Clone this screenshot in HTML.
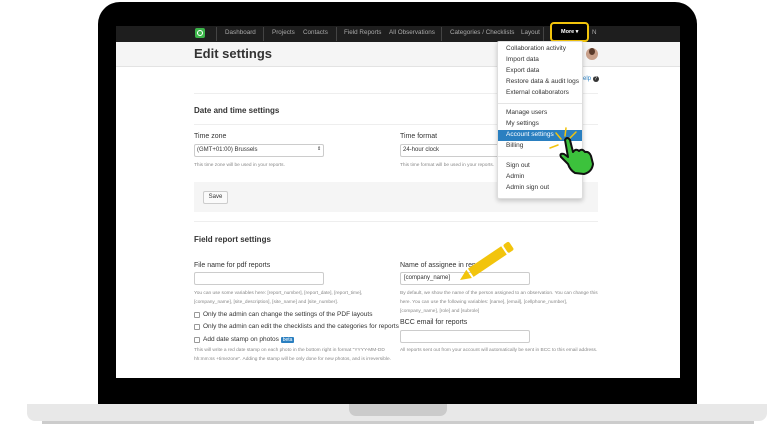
<!DOCTYPE html>
<html><head><meta charset="utf-8"><style>
*{box-sizing:border-box;margin:0;padding:0}
body{width:768px;height:432px;background:#fff;position:relative;overflow:hidden;font-family:"Liberation Sans",sans-serif;color:#333}
.a{position:absolute}
.t{position:absolute;white-space:nowrap}
.nav{font-size:6.3px;color:#aaa}
.lbl{font-size:7px;color:#333}
.help{font-size:4.8px;color:#888;line-height:9px}
.inp{position:absolute;border:1px solid #ccc;border-radius:2px;background:#fff;height:13px}
.dd{font-size:6.5px;color:#333}
.cb{position:absolute;width:6px;height:6px;border:1px solid #999;border-radius:1px;background:#fff}
</style></head><body>
<div class="a" style="left:98px;top:2px;width:599px;height:403px;background:#000;border-radius:22px 22px 0 0"></div>
<div class="a" style="left:27px;top:404px;width:740px;height:17px;background:#e8e8e8;border-radius:0 0 8px 8px"></div>
<div class="a" style="left:42px;top:421px;width:712px;height:3px;background:#ccc"></div>
<div class="a" style="left:349px;top:404px;width:98px;height:12px;background:#cbcbcb;border-radius:0 0 7px 7px"></div>
<div class="a" style="left:116px;top:26px;width:564px;height:352px;background:#fff;overflow:hidden">
 <div class="a" style="left:0;top:0;width:564px;height:16px;background:#1e1e1e"></div>
 <div class="a" style="left:0;top:16px;width:564px;height:25px;background:#f5f5f5;border-bottom:1px solid #e3e3e3"></div>
</div>
<div class="a" style="left:195px;top:28px;width:10px;height:10px;background:#3cb54a;border-radius:2px"></div>
<div class="a" style="left:197px;top:30px;width:6px;height:6px;border:1px solid #fff;border-radius:50%"></div>
<div class="a" style="left:216px;top:27px;width:1px;height:14px;background:#444"></div>
<div class="a" style="left:263px;top:27px;width:1px;height:14px;background:#444"></div>
<div class="a" style="left:336px;top:27px;width:1px;height:14px;background:#444"></div>
<div class="a" style="left:441px;top:27px;width:1px;height:14px;background:#444"></div>
<div class="a" style="left:543px;top:27px;width:1px;height:14px;background:#444"></div>
<div class="t nav" style="left:225px;top:29px">Dashboard</div>
<div class="t nav" style="left:272px;top:29px">Projects</div>
<div class="t nav" style="left:303px;top:29px">Contacts</div>
<div class="t nav" style="left:344px;top:29px">Field Reports</div>
<div class="t nav" style="left:389px;top:29px">All Observations</div>
<div class="t nav" style="left:450px;top:29px">Categories / Checklists</div>
<div class="t nav" style="left:521px;top:29px">Layout</div>
<div class="t nav" style="left:592px;top:29px">N</div>
<div class="a" style="left:550px;top:22px;width:39px;height:20px;border:2px solid #f2c40c;border-radius:4px;background:#000"></div>
<div class="t" style="left:561px;top:29px;font-size:5.5px;color:#fff;font-weight:bold">More ▾</div>
<div class="t" style="left:194px;top:46px;font-size:13px;font-weight:bold;color:#333">Edit settings</div>
<div class="a" style="left:586px;top:48px;width:12px;height:12px;border-radius:50%;background:#c9a08a"></div>
<div class="a" style="left:589px;top:48px;width:6px;height:7px;border-radius:50%;background:#5a3a2a"></div>
<div class="t" style="left:583px;top:76px;font-size:6px;color:#2a7fc0">elp <span style="display:inline-block;width:6px;height:6px;border-radius:50%;background:#333;color:#fff;font-size:5px;text-align:center;line-height:6px">?</span></div>
<div class="a" style="left:194px;top:93px;width:404px;height:1px;background:#eee"></div>
<div class="t" style="left:194px;top:106px;font-size:8px;font-weight:bold;color:#333">Date and time settings</div>
<div class="a" style="left:194px;top:124px;width:404px;height:1px;background:#eee"></div>
<div class="t lbl" style="left:194px;top:133px">Time zone</div>
<div class="inp" style="left:194px;top:144px;width:130px"></div>
<div class="t" style="left:197px;top:147px;font-size:6px">(GMT+01:00) Brussels</div>
<div class="t" style="left:317px;top:146px;font-size:5px">⇕</div>
<div class="t help" style="left:194px;top:161px">This time zone will be used in your reports.</div>
<div class="t lbl" style="left:400px;top:133px">Time format</div>
<div class="inp" style="left:400px;top:144px;width:100px"></div>
<div class="t" style="left:403px;top:147px;font-size:6px">24-hour clock</div>
<div class="t help" style="left:400px;top:161px">This time format will be used in your reports.</div>
<div class="a" style="left:194px;top:182px;width:404px;height:30px;background:#f5f5f5"></div>
<div class="a" style="left:203px;top:191px;width:25px;height:13px;background:#fafafa;border:1px solid #ccc;border-radius:2px;font-size:6px;text-align:center;line-height:11px">Save</div>
<div class="a" style="left:194px;top:221px;width:404px;height:1px;background:#eee"></div>
<div class="t" style="left:194px;top:235px;font-size:8px;font-weight:bold">Field report settings</div>
<div class="t lbl" style="left:194px;top:262px">File name for pdf reports</div>
<div class="inp" style="left:194px;top:272px;width:130px"></div>
<div class="t help" style="left:194px;top:289px">You can use some variables here: [report_number], [report_date], [report_time],<br>[company_name], [site_description], [site_name] and [site_number].</div>
<div class="cb" style="left:194px;top:312px"></div><div class="t" style="left:203px;top:311px;font-size:6.5px">Only the admin can change the settings of the PDF layouts</div>
<div class="cb" style="left:194px;top:324px"></div><div class="t" style="left:203px;top:323px;font-size:6.5px">Only the admin can edit the checklists and the categories for reports</div>
<div class="cb" style="left:194px;top:337px"></div><div class="t" style="left:203px;top:336px;font-size:6.5px">Add date stamp on photos <span style="background:#2a7fc0;color:#fff;font-size:5px;padding:0 2px;border-radius:1px">beta</span></div>
<div class="t help" style="left:194px;top:346px">This will write a red date stamp on each photo in the bottom right in format "YYYY-MM-DD<br>hh:mm:ss +timezone". Adding the stamp will be only done for new photos, and is irreversible.</div>
<div class="t lbl" style="left:400px;top:262px">Name of assignee in reports</div>
<div class="inp" style="left:400px;top:272px;width:130px"></div>
<div class="t" style="left:404px;top:275px;font-size:6px">[company_name]</div>
<div class="t help" style="left:400px;top:289px">By default, we show the name of the person assigned to an observation. You can change this<br>here. You can use the following variables: [name], [email], [cellphone_number],<br>[company_name], [role] and [subrole]</div>
<div class="t lbl" style="left:400px;top:319px">BCC email for reports</div>
<div class="inp" style="left:400px;top:330px;width:130px"></div>
<div class="t help" style="left:400px;top:346px">All reports sent out from your account will automatically be sent in BCC to this email address.</div>
<div class="a" style="left:497px;top:41px;width:86px;height:158px;background:#fff;border:1px solid #ddd;border-radius:2px;box-shadow:0 2px 5px rgba(0,0,0,.2)"></div>
<div class="a" style="left:498px;top:103px;width:84px;height:1px;background:#e5e5e5"></div>
<div class="a" style="left:498px;top:156px;width:84px;height:1px;background:#e5e5e5"></div>
<div class="a" style="left:498px;top:130px;width:84px;height:11px;background:#2a7fc0"></div>
<div class="t dd" style="left:506px;top:45px">Collaboration activity</div>
<div class="t dd" style="left:506px;top:56px">Import data</div>
<div class="t dd" style="left:506px;top:67px">Export data</div>
<div class="t dd" style="left:506px;top:78px">Restore data &amp; audit logs</div>
<div class="t dd" style="left:506px;top:89px">External collaborators</div>
<div class="t dd" style="left:506px;top:109px">Manage users</div>
<div class="t dd" style="left:506px;top:120px">My settings</div>
<div class="t dd" style="left:506px;top:131px;color:#fff">Account settings</div>
<div class="t dd" style="left:506px;top:142px">Billing</div>
<div class="t dd" style="left:506px;top:162px">Sign out</div>
<div class="t dd" style="left:506px;top:173px">Admin</div>
<div class="t dd" style="left:506px;top:184px">Admin sign out</div>
<svg class="a" style="left:0;top:0" width="768" height="432">
 <g stroke="#f2c40c" stroke-width="1.5" stroke-linecap="round">
  <line x1="556" y1="133" x2="561" y2="139"/><line x1="566" y1="128" x2="565" y2="136"/><line x1="576" y1="132" x2="570" y2="138"/><line x1="550" y1="148" x2="558" y2="145"/>
 </g>
 <path d="M565 140 Q567 136 570 140 L573 152 Q576 148 579 151 Q582 148 585 152 Q589 151 591 156 L593 164 Q592 172 584 174 L575 173 Q570 170 568 164 L561 157 Q559 153 564 154 L568 157 Z" fill="#3cc23c" stroke="#111" stroke-width="2" stroke-linejoin="round"/>
 <g transform="translate(460 280) rotate(-34)">
  <polygon points="0,0 11,-5 11,5" fill="#f2c40c"/>
  <rect x="13" y="-5" width="40" height="10" fill="#f2c40c"/>
  <rect x="55" y="-5" width="7" height="10" rx="2" fill="#f2c40c"/>
 </g>
</svg>
</body></html>
